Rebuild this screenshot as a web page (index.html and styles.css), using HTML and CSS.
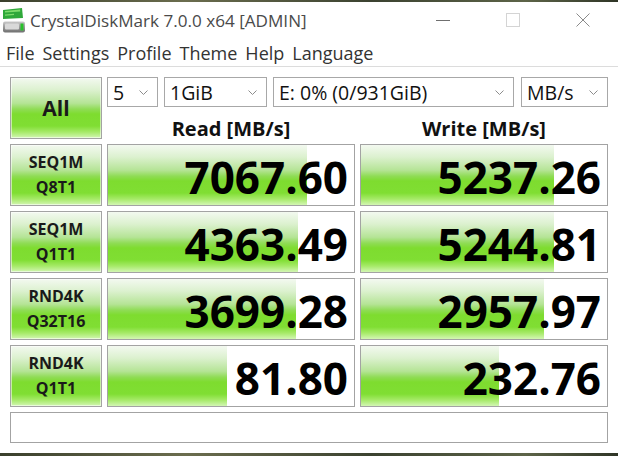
FILE: index.html
```html
<!DOCTYPE html>
<html>
<head>
<meta charset="utf-8">
<link rel="stylesheet" href="styles.css">
</head>
<body>
<div class="window">
  <div class="titlebar">
    <svg class="appicon" width="24" height="26" viewBox="0 0 24 26">
      <defs>
        <linearGradient id="drv" x1="0" y1="0" x2="0" y2="1">
          <stop offset="0" stop-color="#c9c9c9"/>
          <stop offset="0.5" stop-color="#9a9a9a"/>
          <stop offset="1" stop-color="#6f6f6f"/>
        </linearGradient>
      </defs>
      <polygon points="1,3 20,1 21,11 1,12" fill="#2fa83a"/>
      <polygon points="3,4 18,2.6 18.3,4.4 3,5.6" fill="#7fdc6c"/>
      <polygon points="3,7.5 12,6.8 12,8 3,8.7" fill="#7fdc6c"/>
      <rect x="1" y="14.5" width="22" height="11" rx="2" fill="url(#drv)"/>
      <rect x="3" y="16.5" width="14" height="6" rx="1" fill="#d9d9d9"/>
      <rect x="18.5" y="16.5" width="3" height="7" fill="#27c22a"/>
    </svg>
    <span class="title">CrystalDiskMark 7.0.0 x64 [ADMIN]</span>
    <div class="controls">
      <span class="ctl"><span class="min"></span></span>
      <span class="ctl"><span class="max"></span></span>
      <span class="ctl">
        <svg width="14" height="14" viewBox="0 0 14 14"><path d="M0.5 0.5 L13.5 13.5 M13.5 0.5 L0.5 13.5" stroke="#8a8a8a" stroke-width="1" fill="none"/></svg>
      </span>
    </div>
  </div>
  <div class="menubar">
    <span>File</span><span>Settings</span><span>Profile</span><span>Theme</span><span>Help</span><span>Language</span>
  </div>
  <div class="main">
    <div class="btn all">All</div>
    <div class="selects">
      <div class="select w-count"><span>5</span><svg class="chev" width="9" height="5" viewBox="0 0 9 5"><path d="M0.5 0.5 L4.5 4.5 L8.5 0.5" stroke="#8c8c8c" fill="none"/></svg></div>
      <div class="select w-size"><span>1GiB</span><svg class="chev" width="9" height="5" viewBox="0 0 9 5"><path d="M0.5 0.5 L4.5 4.5 L8.5 0.5" stroke="#8c8c8c" fill="none"/></svg></div>
      <div class="select w-drive"><span>E: 0% (0/931GiB)</span><svg class="chev" width="9" height="5" viewBox="0 0 9 5"><path d="M0.5 0.5 L4.5 4.5 L8.5 0.5" stroke="#8c8c8c" fill="none"/></svg></div>
      <div class="select w-unit"><span>MB/s</span><svg class="chev" width="9" height="5" viewBox="0 0 9 5"><path d="M0.5 0.5 L4.5 4.5 L8.5 0.5" stroke="#8c8c8c" fill="none"/></svg></div>
    </div>
    <div class="colhead">Read [MB/s]</div>
    <div class="colhead">Write [MB/s]</div>

    <div class="btn label"><span>SEQ1M</span><span>Q8T1</span></div>
    <div class="value"><div class="fill" style="width:81%"></div><div class="num">7067.60</div></div>
    <div class="value"><div class="fill" style="width:78.5%"></div><div class="num">5237.26</div></div>

    <div class="btn label"><span>SEQ1M</span><span>Q1T1</span></div>
    <div class="value"><div class="fill" style="width:77.3%"></div><div class="num">4363.49</div></div>
    <div class="value"><div class="fill" style="width:78.5%"></div><div class="num">5244.81</div></div>

    <div class="btn label"><span>RND4K</span><span>Q32T16</span></div>
    <div class="value"><div class="fill" style="width:76.5%"></div><div class="num">3699.28</div></div>
    <div class="value"><div class="fill" style="width:74.3%"></div><div class="num">2957.97</div></div>

    <div class="btn label"><span>RND4K</span><span>Q1T1</span></div>
    <div class="value"><div class="fill" style="width:48.4%"></div><div class="num">81.80</div></div>
    <div class="value"><div class="fill" style="width:55.9%"></div><div class="num">232.76</div></div>

    <div class="status"></div>
  </div>
</div>
</body>
</html>
```

FILE: styles.css
```css
html, body {
  margin: 0;
  padding: 0;
}
body {
  width: 618px;
  height: 456px;
  overflow: hidden;
  background: linear-gradient(90deg, #3a3f2c, #6b6d4e 30%, #3b4230 60%, #5d6448 85%, #2f3526);
  font-family: "Open Sans", "Noto Sans", sans-serif;
}
.window {
  margin-top: 2px;
  height: 451px;
  background: #ffffff;
  display: flex;
  flex-direction: column;
}
.titlebar {
  box-sizing: border-box;
  height: 32px;
  padding-top: 4px;
  display: flex;
  align-items: center;
  flex-shrink: 0;
}
.appicon {
  margin-left: 2px;
  flex-shrink: 0;
}
.title {
  margin-left: 4px;
  font-size: 17.1px;
  color: #4a4a4a;
  white-space: nowrap;
}
.controls {
  margin-left: auto;
  display: flex;
  align-items: center;
  height: 100%;
}
.ctl {
  width: 70px;
  height: 100%;
  display: flex;
  align-items: center;
  justify-content: center;
}
.min {
  display: block;
  width: 14px;
  height: 1px;
  background: #6f6f6f;
}
.max {
  display: block;
  width: 12px;
  height: 12px;
  border: 1px solid #d4d4d4;
}
.menubar {
  box-sizing: border-box;
  height: 33px;
  padding-top: 6px;
  border-bottom: 1px solid #dcdcdc;
  display: flex;
  align-items: center;
  padding-left: 6px;
  gap: 8px;
  font-size: 18px;
  color: #333333;
  flex-shrink: 0;
}
.main {
  padding: 10px 10px 0 10px;
  display: grid;
  grid-template-columns: 92px 248px 248px;
  grid-template-rows: 30px 27px 62px 62px 62px 62px 31px;
  column-gap: 5px;
  row-gap: 5px;
}
.btn {
  box-sizing: border-box;
  border: 1px solid #a3a3a3;
  box-shadow: inset 0 0 0 1px rgba(255,255,255,0.55);
  background: linear-gradient(to bottom, #f3f9f0 0%, #dcf1cf 20%, #b5e496 42%, #8fdc55 52%, #7edc2f 60%, #80de33 80%, #a6ea68 90%, #d3f6b4 100%);
  color: #1a1a1a;
  font-weight: 700;
  display: flex;
  flex-direction: column;
  align-items: center;
  justify-content: center;
}
.all {
  grid-row: span 2;
  font-size: 21px;
}
.label {
  font-size: 16px;
  line-height: 25px;
}
.selects {
  grid-column: span 2;
  display: flex;
  gap: 6px;
}
.select {
  box-sizing: border-box;
  height: 30px;
  border: 1px solid #a8a8a8;
  background: #fff;
  display: flex;
  align-items: center;
  padding: 0 9px 0 5px;
  font-size: 19.5px;
  color: #111;
  white-space: nowrap;
}
.select .chev {
  margin-left: auto;
  flex-shrink: 0;
}
.w-count { width: 51px; }
.w-size { width: 103px; }
.w-drive { width: 241px; }
.w-unit { width: 87px; margin-left: 1px; }
.colhead {
  font-size: 20px;
  font-weight: 700;
  color: #111;
  text-align: center;
  line-height: 27px;
  padding-top: 3px;
}
.value {
  box-sizing: border-box;
  border: 1px solid #a3a3a3;
  background: #fff;
  display: grid;
  grid-template: 1fr / 1fr;
}
.fill {
  grid-area: 1 / 1;
  background: linear-gradient(to bottom, #f3f9f0 0%, #dcf1cf 20%, #b5e496 42%, #8fdc55 52%, #7edc2f 60%, #80de33 80%, #a6ea68 90%, #d3f6b4 100%);
  height: 100%;
}
.num {
  grid-area: 1 / 1;
  justify-self: end;
  align-self: center;
  font-size: 44px;
  font-weight: 700;
  color: #000;
  padding-right: 6px;
  line-height: 1;
  margin-top: 4px;
}
.status {
  grid-column: 1 / -1;
  box-sizing: border-box;
  border: 1px solid #a3a3a3;
  background: #fff;
}
```
